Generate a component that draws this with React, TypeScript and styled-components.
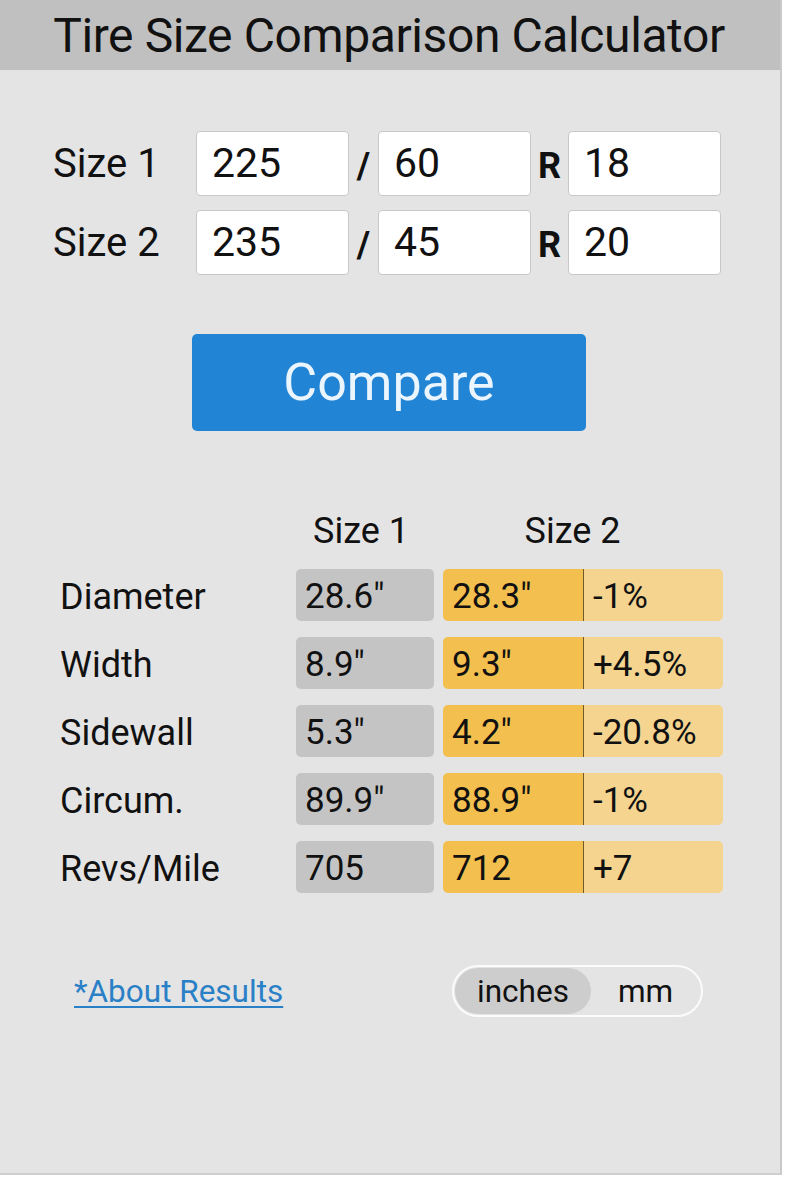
import React from "react";
import styled, { createGlobalStyle } from "styled-components";

const Global = createGlobalStyle`
  html, body { margin: 0; padding: 0; background: #ffffff; }
  body { font-family: Roboto, "Noto Sans", Arial, sans-serif; }
`;

const Page = styled.div`
  width: 780px;
  height: 1173px;
  background: #e4e4e4;
  border-right: 2px solid #c9c9c9;
  border-bottom: 2px solid #cfcfcf;
  display: flex;
  flex-direction: column;
`;

const Header = styled.h1`
  margin: 0;
  height: 70px;
  background: #c0c0c0;
  display: flex;
  align-items: center;
  justify-content: center;
  font-weight: 400;
  font-size: 48px;
  letter-spacing: -0.4px;
  color: #111;
  padding-right: 2px;
`;

const Sizes = styled.div`
  display: flex;
  flex-direction: column;
  gap: 13px;
  padding: 60px 0 0 53px;
`;

const SizeRow = styled.div`
  display: flex;
  align-items: center;
  height: 66px;
`;

const SizeLabel = styled.div`
  width: 143px;
  font-size: 40px;
  color: #111;
`;

const Field = styled.div`
  background: #fff;
  border: 1px solid #c8c8c8;
  border-radius: 4px;
  display: flex;
  align-items: center;
  padding-left: 15px;
  box-sizing: border-box;
  width: 153px;
  height: 65px;
  font-size: 41px;
  color: #111;
`;

const Sep = styled.div<{ $w: number }>`
  width: ${(p) => p.$w}px;
  text-align: center;
  font-size: 36px;
  font-weight: 700;
  color: #111;
  padding-top: 6px;
`;

const ButtonWrap = styled.div`
  display: flex;
  padding: 59px 0 0 192px;
`;

const CompareButton = styled.button`
  width: 394px;
  height: 97px;
  background: #2284d5;
  border: none;
  border-radius: 5px;
  color: #eaf5fd;
  font-family: Roboto, sans-serif;
  font-size: 52px;
  padding: 0;
`;

const Results = styled.div`
  display: flex;
  flex-direction: column;
  gap: 16px;
  padding: 80px 0 0 60px;
`;

const HeadRow = styled.div`
  display: flex;
  height: 40px;
  align-items: center;
  margin-bottom: 2px;
`;

const HeadCell = styled.div<{ $w: number }>`
  width: ${(p) => p.$w}px;
  text-align: center;
  font-size: 36px;
  color: #111;
`;

const Row = styled.div`
  display: flex;
  align-items: center;
  height: 52px;
`;

const RowLabel = styled.div`
  width: 236px;
  font-size: 36px;
  color: #111;
  padding-top: 4px;
`;

const Cell = styled.div<{ $bg: string; $w: number; $round: string; $divider?: boolean }>`
  width: ${(p) => p.$w}px;
  height: 52px;
  box-sizing: border-box;
  background: ${(p) => p.$bg};
  border-radius: ${(p) => p.$round};
  display: flex;
  align-items: center;
  padding-left: 9px;
  padding-top: 2px;
  font-size: 35px;
  color: #111;
  border-left: ${(p) => (p.$divider ? "1px solid #6f5a2c" : "none")};
`;

const Gap = styled.div`
  width: 9px;
`;

const Footer = styled.div`
  display: flex;
  align-items: center;
  justify-content: space-between;
  padding: 72px 77px 0 74px;
`;

const AboutLink = styled.a`
  color: #2a80c6;
  font-size: 31.5px;
  text-decoration: underline;
  text-decoration-thickness: 2px;
  text-underline-offset: 4px;
`;

const Toggle = styled.div`
  display: flex;
  width: 251px;
  height: 52px;
  box-sizing: border-box;
  border: 2px solid #fbfbfb;
  border-radius: 26px;
  overflow: hidden;
  padding: 1px;
`;

const ToggleOpt = styled.div<{ $active?: boolean }>`
  flex: ${(p) => (p.$active ? "0 0 136px" : "1")};
  border-radius: 24px;
  background: ${(p) => (p.$active ? "#cdcdcd" : "transparent")};
  display: flex;
  align-items: center;
  justify-content: center;
  font-size: 31.5px;
  color: #111;
`;

const sizes = [
  { label: "Size 1", a: "225", b: "60", c: "18" },
  { label: "Size 2", a: "235", b: "45", c: "20" },
];

const rows = [
  { label: "Diameter", s1: '28.6"', s2: '28.3"', d: "-1%" },
  { label: "Width", s1: '8.9"', s2: '9.3"', d: "+4.5%" },
  { label: "Sidewall", s1: '5.3"', s2: '4.2"', d: "-20.8%" },
  { label: "Circum.", s1: '89.9"', s2: '88.9"', d: "-1%" },
  { label: "Revs/Mile", s1: "705", s2: "712", d: "+7" },
];

export default function App() {
  return (
    <>
      <Global />
      <Page>
        <Header>Tire Size Comparison Calculator</Header>
        <Sizes>
          {sizes.map((s) => (
            <SizeRow key={s.label}>
              <SizeLabel>{s.label}</SizeLabel>
              <Field>{s.a}</Field>
              <Sep $w={29}>/</Sep>
              <Field>{s.b}</Field>
              <Sep $w={37}>R</Sep>
              <Field>{s.c}</Field>
            </SizeRow>
          ))}
        </Sizes>
        <ButtonWrap>
          <CompareButton>Compare</CompareButton>
        </ButtonWrap>
        <Results>
          <HeadRow>
            <HeadCell $w={236} />
            <HeadCell $w={130}>Size 1</HeadCell>
            <HeadCell $w={0} />
            <HeadCell $w={293}>Size 2</HeadCell>
          </HeadRow>
          {rows.map((r) => (
            <Row key={r.label}>
              <RowLabel>{r.label}</RowLabel>
              <Cell $bg="#c4c4c4" $w={138} $round="5px">{r.s1}</Cell>
              <Gap />
              <Cell $bg="#f3bf4e" $w={140} $round="5px 0 0 5px">{r.s2}</Cell>
              <Cell $bg="#f5d490" $w={140} $round="0 5px 5px 0" $divider>{r.d}</Cell>
            </Row>
          ))}
        </Results>
        <Footer>
          <AboutLink href="#">*About Results</AboutLink>
          <Toggle>
            <ToggleOpt $active>inches</ToggleOpt>
            <ToggleOpt>mm</ToggleOpt>
          </Toggle>
        </Footer>
      </Page>
    </>
  );
}
